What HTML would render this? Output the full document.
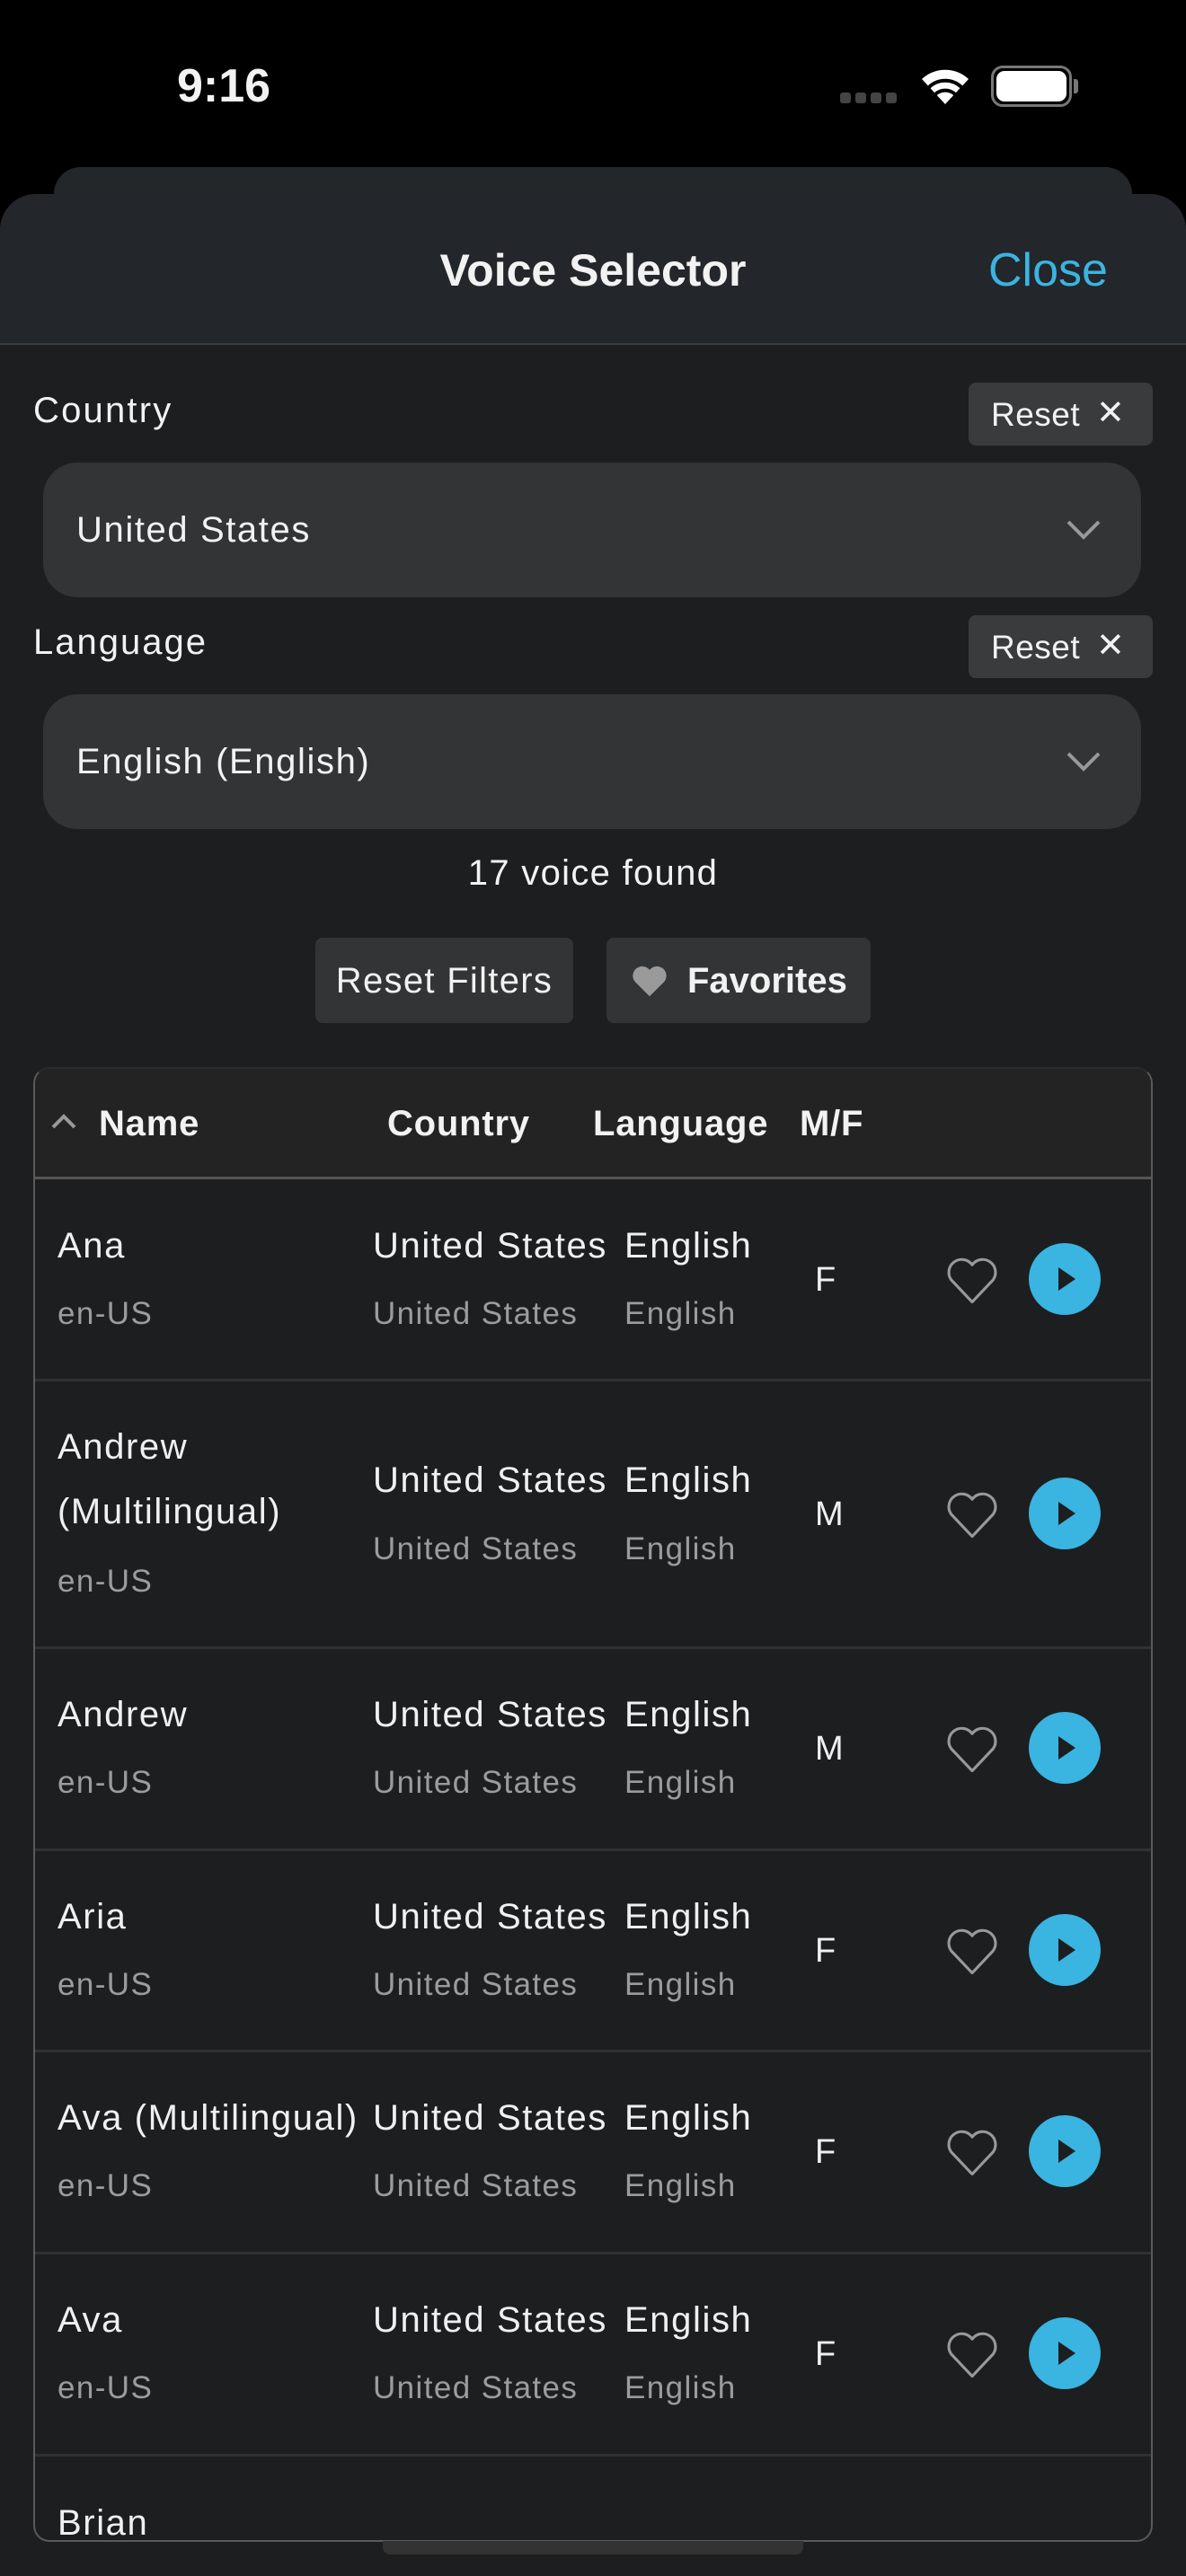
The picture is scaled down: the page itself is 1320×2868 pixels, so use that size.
<!DOCTYPE html>
<html><head><meta charset="utf-8"><style>
*{margin:0;padding:0;box-sizing:border-box}
body{width:1320px;height:2868px;background:#000;font-family:"Liberation Sans",sans-serif;color:#f2f2f2;position:relative;overflow:hidden}
.a{position:absolute;white-space:nowrap;line-height:50px}
.ls{letter-spacing:1.6px}
.sub{color:#9c9c9c;font-size:35px;letter-spacing:1.4px}
.main{font-size:40px;color:#f0f0f0;letter-spacing:1.6px}
.sep{position:absolute;left:39px;width:1242px;height:3px;background:#303132}
.heart{position:absolute;width:62px;height:58px}
.play{position:absolute;width:80px;height:80px;border-radius:50%;background:#3ab4e0}
.play:after{content:"";position:absolute;left:33px;top:27px;border-left:19px solid #1d1e20;border-top:13px solid transparent;border-bottom:13px solid transparent}
</style></head><body>
<div class="a" style="left:197px;top:66px;font-size:52px;font-weight:bold;line-height:60px">9:16</div>
<div style="position:absolute;left:935px;top:103px;width:65px;height:12px;display:flex;gap:5px">
<div style="width:12px;height:12px;background:#444;border-radius:3px"></div><div style="width:12px;height:12px;background:#444;border-radius:3px"></div><div style="width:12px;height:12px;background:#444;border-radius:3px"></div><div style="width:12px;height:12px;background:#444;border-radius:3px"></div></div>
<svg style="position:absolute;left:1022px;top:72px" width="60" height="46" viewBox="0 0 60 46"><path d="M30 44 L4 16 A38 38 0 0 1 56 16 Z" fill="#fff"/><path d="M12 25 A26 26 0 0 1 48 25" stroke="#000" stroke-width="4" fill="none"/><path d="M19 33 A16 16 0 0 1 41 33" stroke="#000" stroke-width="4" fill="none"/></svg>
<div style="position:absolute;left:1103px;top:73px;width:90px;height:46px;border:3px solid #777;border-radius:13px"></div>
<div style="position:absolute;left:1109px;top:79px;width:78px;height:34px;background:#fff;border-radius:9px"></div>
<div style="position:absolute;left:1195px;top:88px;width:5px;height:16px;background:#777;border-radius:0 3px 3px 0"></div>

<div style="position:absolute;left:60px;top:186px;width:1200px;height:100px;background:#24272a;border-radius:30px 30px 0 0"></div>
<div style="position:absolute;left:0;top:216px;width:1320px;height:2652px;background:#1d1e20;border-radius:40px 40px 0 0;overflow:hidden">
<div style="height:168px;background:#23262a;border-bottom:2px solid #3a3c3e"></div></div>
<div class="a" style="left:0;width:1320px;text-align:center;top:273px;font-size:50px;font-weight:bold;line-height:56px">Voice Selector</div>
<div class="a" style="left:1100px;top:273px;font-size:52px;color:#3ab4e0;line-height:56px">Close</div>

<div class="a ls" style="left:37px;top:432px;font-size:40px;letter-spacing:2.2px">Country</div>
<div style="position:absolute;left:1078px;top:426px;width:205px;height:70px;background:#3a3b3c;border-radius:8px"></div>
<div class="a" style="left:1103px;top:437px;font-size:37px;letter-spacing:0.5px">Reset</div>
<div class="a" style="left:1220px;top:435px;font-size:38px;font-weight:300">✕</div>
<div style="position:absolute;left:48px;top:515px;width:1222px;height:150px;background:#333435;border-radius:38px"></div>
<div class="a ls" style="left:85px;top:565px;font-size:40px">United States</div>
<svg style="position:absolute;left:1186px;top:578px" width="40" height="24"><path d="M3 3 L20 20 L37 3" stroke="#999" stroke-width="4" fill="none"/></svg>

<div class="a ls" style="left:37px;top:690px;font-size:40px;letter-spacing:2px">Language</div>
<div style="position:absolute;left:1078px;top:685px;width:205px;height:70px;background:#3a3b3c;border-radius:8px"></div>
<div class="a" style="left:1103px;top:696px;font-size:37px;letter-spacing:0.5px">Reset</div>
<div class="a" style="left:1220px;top:694px;font-size:38px;font-weight:300">✕</div>
<div style="position:absolute;left:48px;top:773px;width:1222px;height:150px;background:#333435;border-radius:38px"></div>
<div class="a ls" style="left:85px;top:823px;font-size:40px">English (English)</div>
<svg style="position:absolute;left:1186px;top:836px" width="40" height="24"><path d="M3 3 L20 20 L37 3" stroke="#999" stroke-width="4" fill="none"/></svg>

<div class="a ls" style="left:0;width:1320px;text-align:center;top:947px;font-size:40px;letter-spacing:1.3px">17 voice found</div>
<div style="position:absolute;left:351px;top:1044px;width:287px;height:95px;background:#333435;border-radius:8px"></div>
<div class="a ls" style="left:351px;width:287px;text-align:center;top:1067px;font-size:40px;letter-spacing:1.3px">Reset Filters</div>
<div style="position:absolute;left:675px;top:1044px;width:294px;height:95px;background:#333435;border-radius:8px"></div>
<svg style="position:absolute;left:702px;top:1073px" width="42" height="38" viewBox="0 0 24 22"><path d="M12 21 L2.5 11.5 A5.5 5.5 0 0 1 12 4 A5.5 5.5 0 0 1 21.5 11.5 Z" fill="#9a9a9a"/></svg>
<div class="a" style="left:765px;top:1067px;font-size:40px;font-weight:bold">Favorites</div>

<div style="position:absolute;left:37px;top:1188px;width:1246px;height:1642px;border:2px solid #5a5a5a;border-top:2px solid #2c2c2c;border-radius:18px;overflow:hidden;background:#1d1e20">
<div style="height:123px;background:#232323;border-bottom:3px solid #555"></div></div>
<svg style="position:absolute;left:56px;top:1238px" width="30" height="20"><path d="M3 17 L15 5 L27 17" stroke="#999" stroke-width="4" fill="none"/></svg>
<div class="a" style="left:110px;top:1226px;font-size:40px;font-weight:bold;letter-spacing:0.8px">Name</div>
<div class="a" style="left:431px;top:1226px;font-size:40px;font-weight:bold;letter-spacing:0.8px">Country</div>
<div class="a" style="left:660px;top:1226px;font-size:40px;font-weight:bold;letter-spacing:0.8px">Language</div>
<div class="a" style="left:890px;top:1226px;font-size:40px;font-weight:bold;letter-spacing:0.8px">M/F</div>

<div class="sep" style="top:1535px"></div><div class="sep" style="top:1833px"></div><div class="sep" style="top:2058px"></div><div class="sep" style="top:2282px"></div><div class="sep" style="top:2507px"></div><div class="sep" style="top:2732px"></div>

<div class="a main" style="left:64px;top:1362px">Ana</div><div class="a sub" style="left:64px;top:1438px">en-US</div>
<div class="a main" style="left:415px;top:1362px">United States</div><div class="a sub" style="left:415px;top:1438px">United States</div>
<div class="a main" style="left:695px;top:1362px">English</div><div class="a sub" style="left:695px;top:1438px">English</div>
<div class="a main" style="left:907px;top:1400px;font-size:38px">F</div>

<div class="a main" style="left:64px;top:1586px">Andrew</div><div class="a main" style="left:64px;top:1658px">(Multilingual)</div><div class="a sub" style="left:64px;top:1736px">en-US</div>
<div class="a main" style="left:415px;top:1623px">United States</div><div class="a sub" style="left:415px;top:1700px">United States</div>
<div class="a main" style="left:695px;top:1623px">English</div><div class="a sub" style="left:695px;top:1700px">English</div>
<div class="a main" style="left:907px;top:1661px;font-size:38px">M</div>

<div class="a main" style="left:64px;top:1884px">Andrew</div><div class="a sub" style="left:64px;top:1960px">en-US</div>
<div class="a main" style="left:415px;top:1884px">United States</div><div class="a sub" style="left:415px;top:1960px">United States</div>
<div class="a main" style="left:695px;top:1884px">English</div><div class="a sub" style="left:695px;top:1960px">English</div>
<div class="a main" style="left:907px;top:1922px;font-size:38px">M</div>

<div class="a main" style="left:64px;top:2109px">Aria</div><div class="a sub" style="left:64px;top:2185px">en-US</div>
<div class="a main" style="left:415px;top:2109px">United States</div><div class="a sub" style="left:415px;top:2185px">United States</div>
<div class="a main" style="left:695px;top:2109px">English</div><div class="a sub" style="left:695px;top:2185px">English</div>
<div class="a main" style="left:907px;top:2147px;font-size:38px">F</div>

<div class="a main" style="left:64px;top:2333px">Ava (Multilingual)</div><div class="a sub" style="left:64px;top:2409px">en-US</div>
<div class="a main" style="left:415px;top:2333px">United States</div><div class="a sub" style="left:415px;top:2409px">United States</div>
<div class="a main" style="left:695px;top:2333px">English</div><div class="a sub" style="left:695px;top:2409px">English</div>
<div class="a main" style="left:907px;top:2371px;font-size:38px">F</div>

<div class="a main" style="left:64px;top:2558px">Ava</div><div class="a sub" style="left:64px;top:2634px">en-US</div>
<div class="a main" style="left:415px;top:2558px">United States</div><div class="a sub" style="left:415px;top:2634px">United States</div>
<div class="a main" style="left:695px;top:2558px">English</div><div class="a sub" style="left:695px;top:2634px">English</div>
<div class="a main" style="left:907px;top:2596px;font-size:38px">F</div>

<div class="a main" style="left:64px;top:2784px">Brian</div>

<svg class="heart" style="left:1051px;top:1396px" viewBox="0 0 24 22"><path d="M12 20.5 L3 11 A5 5 0 0 1 12 4.5 A5 5 0 0 1 21 11 Z" fill="none" stroke="#999" stroke-width="1.2" stroke-linejoin="round"/></svg>
<div class="play" style="left:1145px;top:1384px"></div>
<svg class="heart" style="left:1051px;top:1657px" viewBox="0 0 24 22"><path d="M12 20.5 L3 11 A5 5 0 0 1 12 4.5 A5 5 0 0 1 21 11 Z" fill="none" stroke="#999" stroke-width="1.2" stroke-linejoin="round"/></svg>
<div class="play" style="left:1145px;top:1645px"></div>
<svg class="heart" style="left:1051px;top:1918px" viewBox="0 0 24 22"><path d="M12 20.5 L3 11 A5 5 0 0 1 12 4.5 A5 5 0 0 1 21 11 Z" fill="none" stroke="#999" stroke-width="1.2" stroke-linejoin="round"/></svg>
<div class="play" style="left:1145px;top:1906px"></div>
<svg class="heart" style="left:1051px;top:2143px" viewBox="0 0 24 22"><path d="M12 20.5 L3 11 A5 5 0 0 1 12 4.5 A5 5 0 0 1 21 11 Z" fill="none" stroke="#999" stroke-width="1.2" stroke-linejoin="round"/></svg>
<div class="play" style="left:1145px;top:2131px"></div>
<svg class="heart" style="left:1051px;top:2367px" viewBox="0 0 24 22"><path d="M12 20.5 L3 11 A5 5 0 0 1 12 4.5 A5 5 0 0 1 21 11 Z" fill="none" stroke="#999" stroke-width="1.2" stroke-linejoin="round"/></svg>
<div class="play" style="left:1145px;top:2355px"></div>
<svg class="heart" style="left:1051px;top:2592px" viewBox="0 0 24 22"><path d="M12 20.5 L3 11 A5 5 0 0 1 12 4.5 A5 5 0 0 1 21 11 Z" fill="none" stroke="#999" stroke-width="1.2" stroke-linejoin="round"/></svg>
<div class="play" style="left:1145px;top:2580px"></div>

<div style="position:absolute;left:426px;top:2829px;width:468px;height:15px;background:#333;border-radius:0 0 8px 8px"></div>
</body></html>
